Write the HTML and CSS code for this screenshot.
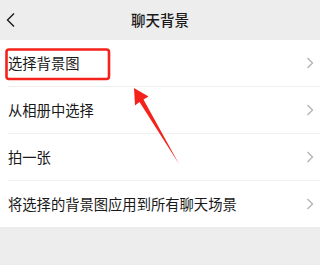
FILE: index.html
```html
<!DOCTYPE html>
<html lang="zh">
<head>
<meta charset="utf-8">
<link rel="stylesheet" href="styles.css">
</head>
<body>
<div class="page">
  <header class="nav">
    <svg class="back" width="10" height="16" viewBox="0 0 10 16"><path d="M8 1.5 L1.5 8 L8 14.5" fill="none" stroke="#1a1a1a" stroke-width="1.4"/></svg>
    <h1 class="title">聊天背景</h1>
  </header>
  <ul class="list">
    <li class="row"><span class="label">选择背景图</span><svg class="chev" width="8" height="12" viewBox="0 0 8 12"><path d="M1.5 1 L6.5 6 L1.5 11" fill="none" stroke="#b2b2b2" stroke-width="1.3"/></svg></li>
    <li class="row"><span class="label">从相册中选择</span><svg class="chev" width="8" height="12" viewBox="0 0 8 12"><path d="M1.5 1 L6.5 6 L1.5 11" fill="none" stroke="#b2b2b2" stroke-width="1.3"/></svg></li>
    <li class="row"><span class="label">拍一张</span><svg class="chev" width="8" height="12" viewBox="0 0 8 12"><path d="M1.5 1 L6.5 6 L1.5 11" fill="none" stroke="#b2b2b2" stroke-width="1.3"/></svg></li>
    <li class="row"><span class="label">将选择的背景图应用到所有聊天场景</span><svg class="chev" width="8" height="12" viewBox="0 0 8 12"><path d="M1.5 1 L6.5 6 L1.5 11" fill="none" stroke="#b2b2b2" stroke-width="1.3"/></svg></li>
  </ul>
  <svg class="annot" width="320" height="265" viewBox="0 0 320 265">
    <rect x="6.5" y="49.5" width="102.5" height="29.5" rx="2.5" fill="none" stroke="#f5221b" stroke-width="2.6"/>
    <polygon points="134,88 148.5,96.5 143.5,99.5 179,164 139.5,102 135,105.5" fill="#f5221b"/>
  </svg>
</div>
</body>
</html>
```
FILE: styles.css
```css
* { box-sizing: border-box; }
html, body { margin: 0; padding: 0; }
body {
  background: #ededed;
  font-family: "Noto Sans CJK SC", "Noto Sans", sans-serif;
  color: #191919;
}
.page { position: relative; width: 320px; height: 265px; overflow: hidden; }
.nav {
  height: 40px;
  display: flex;
  align-items: center;
  justify-content: center;
  position: relative;
  background: #ededed;
}
.back { position: absolute; left: 6px; top: 12px; }
.title { margin: 0; font-size: 14.5px; font-weight: 500; line-height: 20px; color: #191919; }
.list { list-style: none; margin: 0; padding: 0; background: #fff; }
.row {
  height: 47px;
  display: flex;
  align-items: center;
  justify-content: space-between;
  padding: 0 6px 0 8px;
  position: relative;
}
.row:first-child { height: 46px; }
.row + .row { border-top: 1px solid #f0f0f0; margin-left: 8px; padding-left: 0; }
.label { font-size: 14.3px; line-height: 20px; }
.chev { display: block; }
.annot { position: absolute; left: 0; top: 0; pointer-events: none; }
```
